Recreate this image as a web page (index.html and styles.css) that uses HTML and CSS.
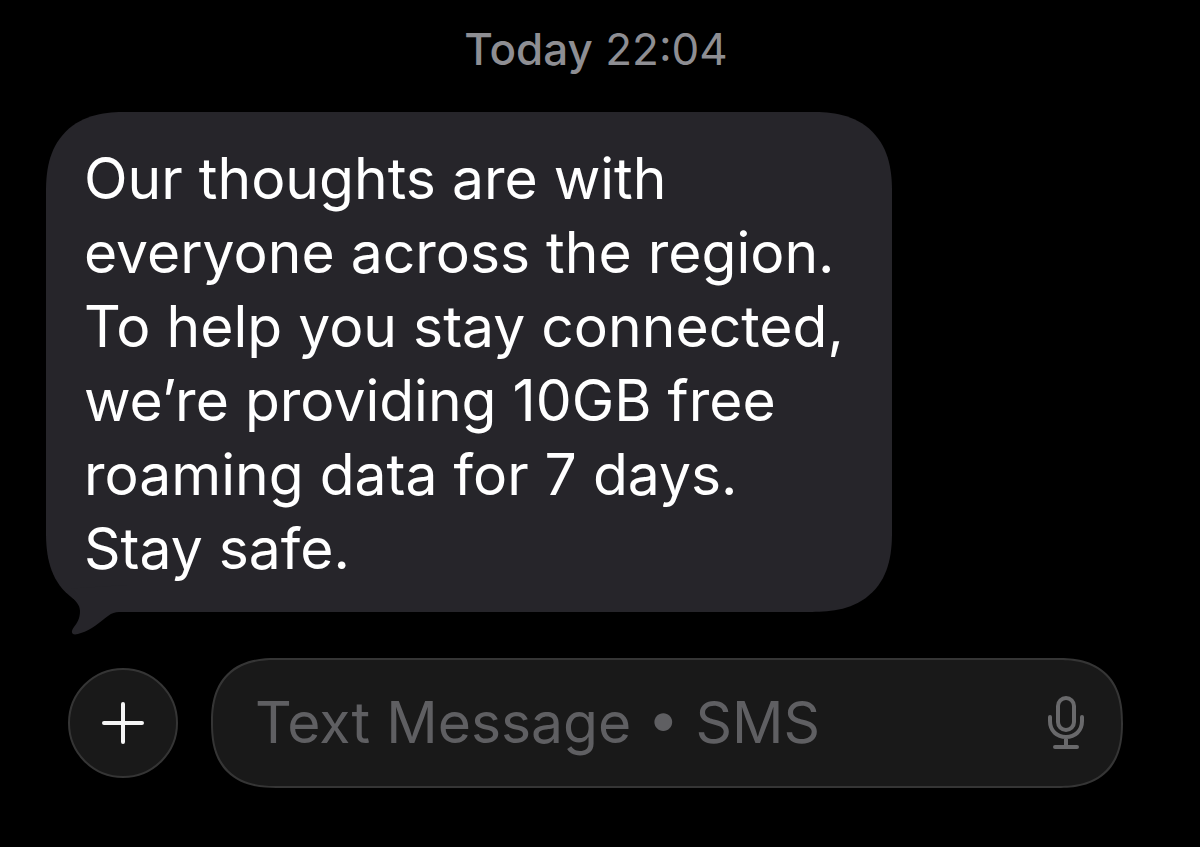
FILE: index.html
```html
<!DOCTYPE html>
<html lang="en">
<head>
<meta charset="UTF-8">
<meta name="viewport" content="width=device-width, initial-scale=1.0">
<title>Messages</title>
<link rel="stylesheet" href="styles.css">
</head>
<body>
    <main class="chat">
        <div class="timestamp"><b>Today</b> 22:04</div>
        <div class="message">
            <p class="message-text">Our thoughts are with everyone across the region. To help you stay connected, we’re providing 10GB free roaming data for 7 days.<br>Stay safe.</p>
            <svg class="message-tail" viewBox="0 0 56 50" aria-hidden="true">
                <path d="M-6 4C0 13 9 17 9 26C9 34 6 38 3 42C1 45 0 47 2 49C4 50 7 49 10 48C20 45 29 37 37 31C41 28 44 27 48 27H56V0Z"/>
            </svg>
        </div>
        <form class="composer">
            <button class="add-button" type="button" aria-label="Add">
                <svg viewBox="0 0 44 44"><path d="M22 3V41M3 22H41"/></svg>
            </button>
            <div class="field">
                <input class="field-input" type="text" placeholder="Text Message • SMS" aria-label="Text Message">
                <button class="mic-button" type="button" aria-label="Dictate">
                    <svg viewBox="0 0 36 54"><rect x="10" y="2" width="16" height="32" rx="8"/><path d="M2 21V25C2 35 9 41 18 41S34 35 34 25V21M18 41V51M7 51H29"/></svg>
                </button>
            </div>
        </form>
    </main>
</body>
</html>
```
FILE: styles.css
```css
body {
    margin: 0;
    background-color: #000;
    color: #fff;
    font-family: Inter, Roboto, sans-serif;
}
.chat {
    padding: 19px 54px 48px 46px;
}
.timestamp {
    margin-bottom: 33px;
    color: #8e8e93;
    font-size: 44px;
    line-height: 60px;
    text-align: center;
}
.timestamp b {
    font-weight: 500;
}
.message {
    position: relative;
    box-sizing: border-box;
    max-width: 846px;
    padding: 30px 38px 26px;
    border-radius: 80px;
    corner-shape: superellipse(1.3);
    background-color: #26252a;
}
.message-text {
    margin: 0;
    font-size: 57px;
    line-height: 74px;
}
.message-tail {
    position: absolute;
    left: 25px;
    bottom: -23px;
    width: 56px;
    height: 50px;
    fill: #26252a;
}
.composer {
    display: flex;
    align-items: center;
    gap: 33px;
    margin: 46px 23px 0 22px;
}
.add-button {
    flex: none;
    display: grid;
    place-items: center;
    width: 110px;
    height: 110px;
    padding: 0;
    border: 2px solid #353535;
    border-radius: 50%;
    background-color: #191919;
}
.add-button svg {
    width: 44px;
    height: 44px;
    fill: none;
    stroke: #f5f5f5;
    stroke-width: 4;
    stroke-linecap: round;
}
.field {
    flex: 1;
    display: flex;
    align-items: center;
    box-sizing: border-box;
    min-width: 0;
    height: 130px;
    padding: 0 37px 0 42px;
    border: 2px solid #353535;
    border-radius: 65px;
    corner-shape: superellipse(1.3);
    background-color: #191919;
}
.field-input {
    flex: 1;
    min-width: 0;
    padding: 0;
    border: 0;
    outline: 0;
    background: none;
    color: #fff;
    font: 57px/74px Inter, Roboto, sans-serif;
}
.field-input::placeholder {
    color: #5f5f62;
    opacity: 1;
}
.mic-button {
    padding: 0;
    border: 0;
    background: none;
}
.mic-button svg {
    display: block;
    width: 36px;
    height: 54px;
    fill: none;
    stroke: #69696b;
    stroke-width: 4;
    stroke-linecap: round;
}
```
